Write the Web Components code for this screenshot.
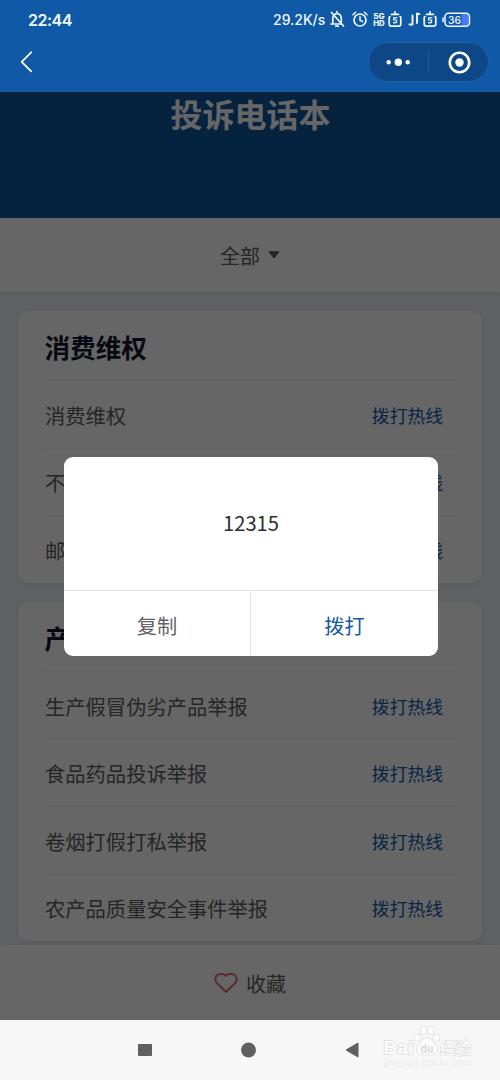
<!DOCTYPE html>
<html lang="zh-CN">
<head>
<meta charset="utf-8">
<title>投诉电话本</title>
<style>
html,body{margin:0;height:100%;overflow:hidden}
body{font-family:"Noto Sans CJK SC","Noto Sans",sans-serif}
</style>
</head>
<body>
<phone-screen></phone-screen>
<script>
const define=(name,html,setup)=>customElements.define(name,class extends HTMLElement{
  constructor(){super();const r=this.attachShadow({mode:'open'});const t=document.createElement('template');t.innerHTML=html;r.append(t.content.cloneNode(true));}
  connectedCallback(){if(setup)setup(this,this.shadowRoot);}
});

define('status-bar',`<style>
:host{display:flex;height:40px;box-sizing:border-box;padding:0 29px 0 28px;justify-content:space-between;align-items:center;color:#f1f8ff}
.time{font:600 16px/20px Inter,sans-serif;letter-spacing:-.5px}
.right{display:flex;align-items:center}
.speed{font:500 14px/20px Inter,sans-serif;width:56px;white-space:nowrap}
svg{display:block}
</style>
<span class="time">22:44</span>
<div class="right"><span class="speed">29.2K/s</span>
<svg width="142" height="20" viewBox="329 10 142 20" fill="none" stroke="#f1f8ff" stroke-width="1.5" stroke-linecap="round" stroke-linejoin="round">
<path d="M331 24h10.500M332.800 24v-5.500q.2-4.500 4.200-5q4.200.5 4.300 5v3.500M337 11.600v1.200M335.800 26.200h2.400M331.500 12.500l12 13.500" stroke-width="1.700"/>
<circle cx="360" cy="20" r="6" stroke-width="1.700"/><path d="M360 16.800v3.500l2.600 1.200M353 14.800l2.600-2.500M367 14.800l-2.600-2.500"/>
<g fill="#f1f8ff" stroke="none" font-family="Inter,sans-serif" font-weight="800" font-size="7.600"><text x="373.200" y="18.800" textLength="11.500" lengthAdjust="spacingAndGlyphs">5G</text><text x="373.200" y="26.300" textLength="11.500" lengthAdjust="spacingAndGlyphs">HD</text></g>
<path d="M391.500 14.300h7M390 16.500q-.8 0-.8 1v6.500q0 2.200 2.200 2.200h7.200q2.200 0 2.200-2.200v-6.500q0-1-.8-1M395 11.800v2.500" stroke-width="1.700"/><path d="M397 17.800h-3.300v2.100q3-.2 3 1.500t-3.200 1.300" stroke-width="1.300"/>
<path d="M409.500 24.500h3v-9M417 23v-9.500l2.300.6" stroke-width="1.900"/>
<path d="M426.500 14.300h7M425 16.500q-.8 0-.8 1v6.500q0 2.200 2.200 2.200h7.200q2.200 0 2.200-2.200v-6.500q0-1-.8-1M430 11.800v2.500" stroke-width="1.700"/><path d="M432 17.800h-3.300v2.100q3-.2 3 1.500t-3.200 1.300" stroke-width="1.300"/>
<path d="M461.500 14h7v11.500h-7z" fill="#477cf4" stroke="none"/><rect x="445" y="13.300" width="24.500" height="13" rx="3.500"/><path d="M443.100 18v3.500"/>
<text x="448" y="24.100" textLength="13" lengthAdjust="spacingAndGlyphs" fill="#f1f8ff" stroke="none" font-family="Inter,sans-serif" font-weight="500" font-size="11">36</text>
</svg></div>`);

define('mini-nav',`<style>
:host{display:flex;height:52px;box-sizing:border-box;padding:2px 11px 10px 18px;justify-content:space-between;align-items:center}
svg{display:block}
.capsule{box-sizing:border-box;width:121px;height:40px;border-radius:20px;background:#0d4786;border:1px solid #205fa5;display:flex;align-items:center}
</style>
<svg width="18" height="24" viewBox="0 0 18 24" fill="none" stroke="#fff" stroke-width="1.800" stroke-linecap="round" stroke-linejoin="round"><path d="M13.200 2.300L3.700 11.800L13.200 21.300"/></svg>
<div class="capsule"><svg width="119" height="38" viewBox="369 43 119 38"><g fill="#fff"><circle cx="388.700" cy="62.200" r="2.200"/><circle cx="398.300" cy="62.200" r="3.700"/><circle cx="407.700" cy="62.200" r="2.200"/><circle cx="459.500" cy="62.500" r="4.200"/></g><path d="M428.500 49v25" stroke="#245991"/><circle cx="459.500" cy="62.500" r="9.700" fill="none" stroke="#fff" stroke-width="2.600"/></svg></div>`);

define('call-row',`<style>
:host{display:flex;height:67.6px;box-sizing:border-box;border-top:1px solid #eeeff0;justify-content:space-between;align-items:center;padding:1px 12px 0 0;font-size:20.300px;color:#5c5c5e;white-space:nowrap}
a{font-size:17.800px;color:#165ba8}
</style><span><slot></slot></span><a>拨打热线</a>`);

define('hotline-card',`<style>
:host{display:block;background:#fff;border-radius:10px;padding:0 27px;box-shadow:0 1px 7px rgba(40,60,90,.09)}
h2{margin:0;height:69px;line-height:72px;font-size:25.600px;font-weight:700;color:#10182c;margin-left:-.5px}
</style><h2></h2><slot></slot>`,(el,r)=>{r.querySelector('h2').textContent=el.getAttribute('heading');});

define('filter-bar',`<style>
:host{display:flex;height:74px;background:#fff;align-items:center;justify-content:center;gap:8px;font-size:20px;color:#5c5c5e;box-shadow:0 2px 4px rgba(30,60,100,.1);position:relative}
svg{display:block}
</style><span>全部</span><svg width="12" height="8" viewBox="0 0 12 8"><path d="M1 .8h10L6 7z" fill="#5c5c5e" stroke="#5c5c5e" stroke-linejoin="round"/></svg>`);

define('favorite-bar',`<style>
:host{display:flex;height:75px;background:#fff;align-items:center;justify-content:center;gap:8px;font-size:20px;color:#5c5c5e;position:relative;box-shadow:0 -1px 3px rgba(30,60,100,.06)}
svg{display:block}span{position:relative;top:1px}
</style><svg width="24" height="22" viewBox="0 0 24 22"><path d="M12 20L3.300 11.500C-.5 7 2 2 6.500 2h2q2 0 3.500 2q1.500-2 3.500-2h2C22 2 24.500 7 20.700 11.500z" fill="none" stroke="#d97174" stroke-width="2" stroke-linejoin="round"/></svg><span>收藏</span>`);

define('call-dialog',`<style>
:host{display:grid;grid-template-rows:133px 1fr;width:374px;height:199.500px;background:#fff;border-radius:9px;overflow:hidden;font-size:20.200px;text-align:center}
.num{display:flex;align-items:center;justify-content:center;color:#2e2f33;padding-bottom:1px}
.actions{display:grid;grid-template-columns:1fr 1fr;border-top:1px solid #e2e2e3;line-height:69px}
.copy{color:#656367;border-right:1px solid #e5e5e6}.call{color:#1659a2}
</style><div class="num"><slot></slot></div><div class="actions"><span class="copy">复制</span><span class="call">拨打</span></div>`);

define('android-nav',`<style>
:host{display:block;height:60px;background:#f7f7f7}svg{display:block}
</style><svg width="500" height="60" viewBox="0 1020 500 60">
<g fill="#606060"><rect x="138" y="1044" width="14" height="12" rx="1"/><circle cx="248.500" cy="1050" r="7.500"/><path d="M346 1050l12-7v14z" stroke="#606060" stroke-linejoin="round"/></g>
<g fill="#fcfcfc" stroke="#dedede" stroke-width="1.400" paint-order="stroke" font-family="Liberation Sans,sans-serif" font-weight="700">
<text x="383.500" y="1054" font-size="19" textLength="30" lengthAdjust="spacingAndGlyphs">Bai</text>
<ellipse cx="417.300" cy="1037.500" rx="2.800" ry="3.600"/><ellipse cx="423.500" cy="1030.500" rx="2.900" ry="4"/><ellipse cx="431" cy="1030.500" rx="2.900" ry="4"/><ellipse cx="436.500" cy="1038" rx="2.800" ry="3.600"/>
<path d="M427 1038c-4 0-5 4-8 6.500c-4 3.500-2 10 3 10h10c5 0 7-6.500 3-10c-3-2.500-4-6.500-8-6.500z"/>
<text x="420.500" y="1052.500" font-size="12" textLength="13" lengthAdjust="spacingAndGlyphs" fill="#d8d8d8" stroke="none">du</text>
<text x="440" y="1053.500" font-size="16" font-family="Noto Sans CJK SC,sans-serif" font-weight="500" textLength="31" lengthAdjust="spacingAndGlyphs">经验</text></g>
<text x="384" y="1066" font-family="Liberation Sans,sans-serif" font-size="10" fill="#ebebeb" textLength="88" lengthAdjust="spacingAndGlyphs">jingyan.baidu.com</text>
</svg>`);

define('phone-screen',`<style>
:host{display:flex;flex-direction:column;width:500px;height:1080px;overflow:hidden}
header{height:92px;background:#1059a6}
.app{height:928px;position:relative;background:#edf1f7;display:flex;flex-direction:column}
.hero{height:126px;background:#0e569f;text-align:center;color:#fff;font-size:32px;font-weight:700;line-height:42px;text-indent:1px}
.list{flex:1;display:flex;flex-direction:column;gap:19px;padding:19px 18px 0}
.mask{position:absolute;inset:0;background:rgba(0,0,0,.6)}
call-dialog{position:absolute;left:64px;top:364.6px}
</style>
<header><status-bar></status-bar><mini-nav></mini-nav></header>
<div class="app"><div class="hero">投诉电话本</div><filter-bar></filter-bar>
<div class="list">
<hotline-card heading="消费维权"><call-row>消费维权</call-row><call-row>不</call-row><call-row>邮</call-row></hotline-card>
<hotline-card heading="产"><call-row>生产假冒伪劣产品举报</call-row><call-row>食品药品投诉举报</call-row><call-row>卷烟打假打私举报</call-row><call-row>农产品质量安全事件举报</call-row></hotline-card>
</div><favorite-bar></favorite-bar><div class="mask"></div><call-dialog>12315</call-dialog></div>
<android-nav></android-nav>`);
</script>
</body>
</html>
